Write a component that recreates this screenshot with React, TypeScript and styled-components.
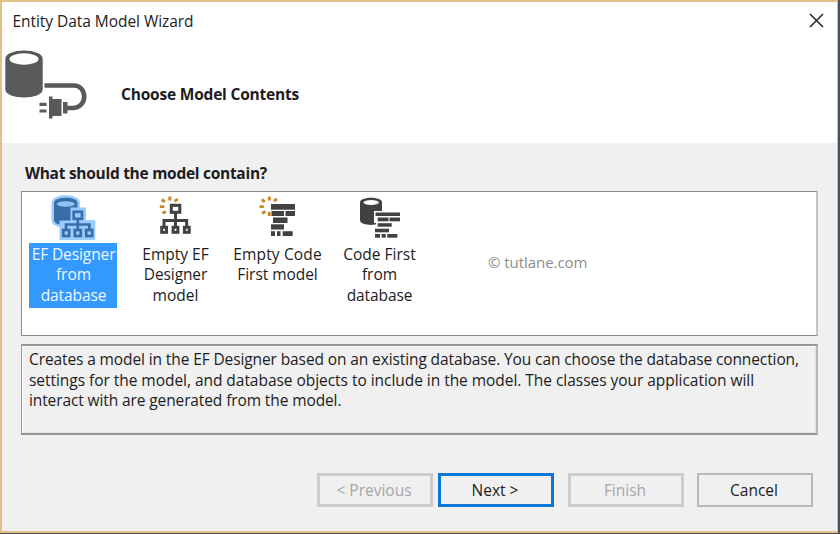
import React from "react";
import styled, { createGlobalStyle } from "styled-components";

const GlobalStyle = createGlobalStyle`
  * { box-sizing: border-box; }
  body { margin: 0; background: #f0f0f0; }
`;

const Window = styled.div`
  width: 840px;
  height: 534px;
  overflow: hidden;
  background: #4c4f54;
  padding: 0 2px 1px 0;
  font-family: "Open Sans", "Noto Sans", sans-serif;
  font-size: 15.5px;
  color: #1c1c22;
`;

const Frame = styled.div`
  display: flex;
  flex-direction: column;
  height: 533px;
  border: solid #e4bf8a;
  border-width: 2px 1px 2px 2px;
  background: #f0f0f0;
`;

const Header = styled.header`
  height: 141px;
  flex: none;
  background: #fff;
`;

const TitleBar = styled.div`
  display: flex;
  justify-content: space-between;
  align-items: center;
  height: 40px;
  padding: 0 13px 2px 10.5px;
`;

const Fit = styled.span<{ $ls?: number }>`
  white-space: pre;
  letter-spacing: ${(p) => p.$ls ?? 0}px;
`;

const CloseButton = styled.button`
  display: flex;
  padding: 0;
  margin-bottom: 2px;
  border: 0;
  background: none;
`;

const Banner = styled.div`
  display: flex;
  height: 80px;
`;

const BannerTitle = styled.h1`
  margin: 41px 0 0 29px;
  font-size: 15.5px;
  line-height: 22px;
  font-weight: 700;
`;

const Body = styled.main`
  padding: 19px 19px 0;
`;

const Question = styled.h2`
  margin: 0 0 7px 4px;
  height: 22px;
  font-size: 15.5px;
  line-height: 22px;
  font-weight: 700;
`;

const ModelList = styled.div`
  display: flex;
  width: 797px;
  height: 145px;
  border: 1px solid #878b93;
  border-right: 2px solid #c3c3c9;
  background: #fff;
`;

const ModelItem = styled.div`
  display: flex;
  flex-direction: column;
  align-items: center;
  width: 102px;
  padding-top: 2px;
`;

const ItemLabel = styled.div<{ $selected?: boolean }>`
  display: flex;
  flex-direction: column;
  align-items: center;
  width: 88px;
  height: 65px;
  margin-top: 1px;
  padding: 1px 0 0 1px;
  line-height: 20.4px;
  color: ${(p) => (p.$selected ? "#eef6ff" : "#1c1c22")};
  background: ${(p) => (p.$selected ? "#3399ff" : "transparent")};
`;

const Watermark = styled.div`
  margin: 59px 0 0 58px;
  height: 22px;
  line-height: 22px;
  font-size: 15px;
  color: #8d8d8d;
`;

const Description = styled.div`
  display: flex;
  flex-direction: column;
  width: 797px;
  height: 91px;
  margin-top: 8px;
  padding: 3px 0 0 7px;
  line-height: 20.5px;
  border: solid #969696;
  border-width: 2px 2px 2px 1px;
  border-right-color: #b4b6b8;
  box-shadow: inset 1px 1px 0 #fbfbfb, inset -1px -1px 0 #e2e2e2;
`;

const Buttons = styled.footer`
  display: flex;
  margin: 38px 0 0 296px;
`;

type Kind = "disabled" | "primary" | "normal";
const edge: Record<Kind, string> = {
  disabled: "3px solid #cccccc",
  primary: "3px solid #0a78d7",
  normal: "2px solid #b9b9b9",
};

const Button = styled.button<{ $kind: Kind; $gap: number }>`
  width: 116px;
  height: 34px;
  margin: 0 ${(p) => p.$gap}px 0 0;
  padding: 0 2px 0 0;
  border: ${(p) => edge[p.$kind]};
  background: #f0f0f0;
  font: inherit;
  color: ${(p) => (p.$kind === "disabled" ? "#a6a6a6" : "#1c1c22")};
`;

const Icon = styled.svg`
  display: block;
  flex: none;
`;

type Rect = [number, number, number, number];
const Rects = ({ items }: { items: Rect[] }) => (
  <>
    {items.map(([x1, y1, x2, y2], i) => (
      <rect key={i} x={x1} y={y1} width={x2 - x1} height={y2 - y1} />
    ))}
  </>
);

const PlugLogo = () => (
  <Icon width="90" height="80" viewBox="2 42 90 80">
    <path d="M5.3 59C5.3 47.5 42.7 47.5 42.7 59V89.500C42.700 100 5.300 100 5.300 89.500Z" fill="#58595b" />
    <ellipse cx="24" cy="59" rx="14.5" ry="5.8" fill="#fff" />
    <path d="M44.500 85.500H74C80 85.500 84.200 90.500 84.200 96.500S80 108 73 108H67" fill="none" stroke="#58595b" strokeWidth="4.600" />
    <path d="M39.500 102.700h7v3.200h-7zM39.500 109.400h7v3.200h-7zM49 96.500h3.500v2.500H61.500V116H52.500v2.500H49zM63 102h4.500v11.500H63z" fill="#58595b" />
  </Icon>
);

const cylinder = "M5 9C5 2 28.500 2 28.500 9V26C28.500 33 5 33 5 26Z";

const DesignerDatabaseIcon = () => (
  <Icon width="48" height="48">
    <path d={cylinder} fill="#99ccff" stroke="#99ccff" strokeWidth="5" />
    <path d={cylinder} fill="#386da8" />
    <ellipse cx="16.800" cy="10" rx="9" ry="2.800" fill="#8fc4f6" />
    <path d="M21.500 13.500H37V26H46.300V46H10.500V26.500H21.500Z" fill="#99ccff" />
    <g fill="none" stroke="#386da8" strokeWidth="2.700">
      <rect x="24.700" y="17.800" width="8.300" height="7" />
      <path d="M28.800 25V36M17 36V30.500H40.300V36" />
      <rect x="14.200" y="36" width="6" height="6" />
      <rect x="25.800" y="36" width="6" height="6" />
      <rect x="37.200" y="36" width="6" height="6" />
    </g>
  </Icon>
);

const EmptyDesignerIcon = () => (
  <Icon width="48" height="48">
    <path d="M10.800 5.500l3 2.300M18.800 2.500v4M26.500 5l-2.800 2.300M8.800 12.600h4.500M11.500 19.300l3.300-1.800" stroke="#cc8526" strokeWidth="2.900" />
    <g fill="none" stroke="#414143" strokeWidth="3">
      <rect x="20.300" y="11.300" width="8.500" height="7" />
      <path d="M24.500 19V33M13 33V26.500H35.700V33" />
      <rect x="10.700" y="33.300" width="4.800" height="5" />
      <rect x="22.100" y="33.300" width="4.800" height="5" />
      <rect x="33.400" y="33.300" width="4.800" height="5" />
    </g>
  </Icon>
);

const EmptyCodeIcon = () => (
  <Icon width="48" height="48">
    <path d="M8.800 5.500l3 2.300M16.300 2.500v4M24 4.800l-3 2.300M6.500 12.600h4.300M9 19.300l3.500-1.800M16.300 18v4" stroke="#cc8526" strokeWidth="2.900" />
    <g fill="#414143">
      <Rects
        items={[
          [18, 10, 42, 15.7],
          [18.5, 17, 31, 22],
          [32.5, 17, 42, 22],
          [20, 23.5, 34.5, 29],
          [18, 30.300, 31, 35.500],
          [18, 37.200, 22, 42],
          [24, 37.200, 27.500, 42],
          [29.700, 37.200, 39.700, 42],
        ]}
      />
    </g>
  </Icon>
);

const CodeDatabaseIcon = () => (
  <Icon width="48" height="48">
    <path d="M5 8.500C5 2.300 27 2.300 27 8.500V26C27 32.500 5 32.500 5 26Z" fill="#414143" />
    <ellipse cx="16.200" cy="8.500" rx="7.600" ry="2.600" fill="#fff" />
    <path d="M19 17H47V34H42V46H19V33H21V29H19Z" fill="#fff" />
    <g fill="#414143">
      <Rects
        items={[
          [20.500, 18.500, 45, 22],
          [22.700, 23.500, 33.500, 27.300],
          [34.500, 23.500, 45, 27.300],
          [22.700, 29.200, 36.700, 32.700],
          [20, 34.700, 34, 38.300],
          [20, 40, 25, 43.700],
          [26.700, 40, 30.700, 43.700],
          [32.300, 40, 42.300, 43.700],
        ]}
      />
    </g>
  </Icon>
);

const models = [
  { icon: <DesignerDatabaseIcon />, lines: [["EF Designer", -0.1], ["from", 0], ["database", -0.1]] },
  { icon: <EmptyDesignerIcon />, lines: [["Empty EF", 0], ["Designer", -0.1], ["model", 0]] },
  { icon: <EmptyCodeIcon />, lines: [["Empty Code", 0.15], ["First model", -0.05]] },
  { icon: <CodeDatabaseIcon />, lines: [["Code First", 0], ["from", 0], ["database", -0.1]] },
] as { icon: React.ReactNode; lines: [string, number][] }[];

export default function App() {
  return (
    <>
      <GlobalStyle />
      <Window>
        <Frame>
          <Header>
            <TitleBar>
              <Fit $ls={-0.05}>Entity Data Model Wizard</Fit>
              <CloseButton aria-label="Close">
                <Icon width="16" height="16">
                  <path d="M2 2L15 15M15 2L2 15" stroke="#222" strokeWidth="1.500" />
                </Icon>
              </CloseButton>
            </TitleBar>
            <Banner>
              <PlugLogo />
              <BannerTitle>
                <Fit $ls={-0.2}>Choose Model Contents</Fit>
              </BannerTitle>
            </Banner>
          </Header>
          <Body>
            <Question>
              <Fit $ls={-0.28}>What should the model contain?</Fit>
            </Question>
            <ModelList>
              {models.map((m, i) => (
                <ModelItem key={i}>
                  {m.icon}
                  <ItemLabel $selected={i === 0}>
                    {m.lines.map(([text, ls]) => (
                      <Fit key={text} $ls={ls}>{text}</Fit>
                    ))}
                  </ItemLabel>
                </ModelItem>
              ))}
              <Watermark>
                <Fit $ls={-0.05}>© tutlane.com</Fit>
              </Watermark>
            </ModelList>
            <Description>
              <Fit $ls={-0.11}>Creates a model in the EF Designer based on an existing database. You can choose the database connection,</Fit>
              <Fit $ls={-0.04}>settings for the model, and database objects to include in the model. The classes your application will</Fit>
              <Fit $ls={-0.11}>interact with are generated from the model.</Fit>
            </Description>
            <Buttons>
              <Button $kind="disabled" $gap={5} disabled><Fit>&lt; Previous</Fit></Button>
              <Button $kind="primary" $gap={14}><Fit>Next &gt;</Fit></Button>
              <Button $kind="disabled" $gap={13} disabled><Fit>Finish</Fit></Button>
              <Button $kind="normal" $gap={0}><Fit>Cancel</Fit></Button>
            </Buttons>
          </Body>
        </Frame>
      </Window>
    </>
  );
}
